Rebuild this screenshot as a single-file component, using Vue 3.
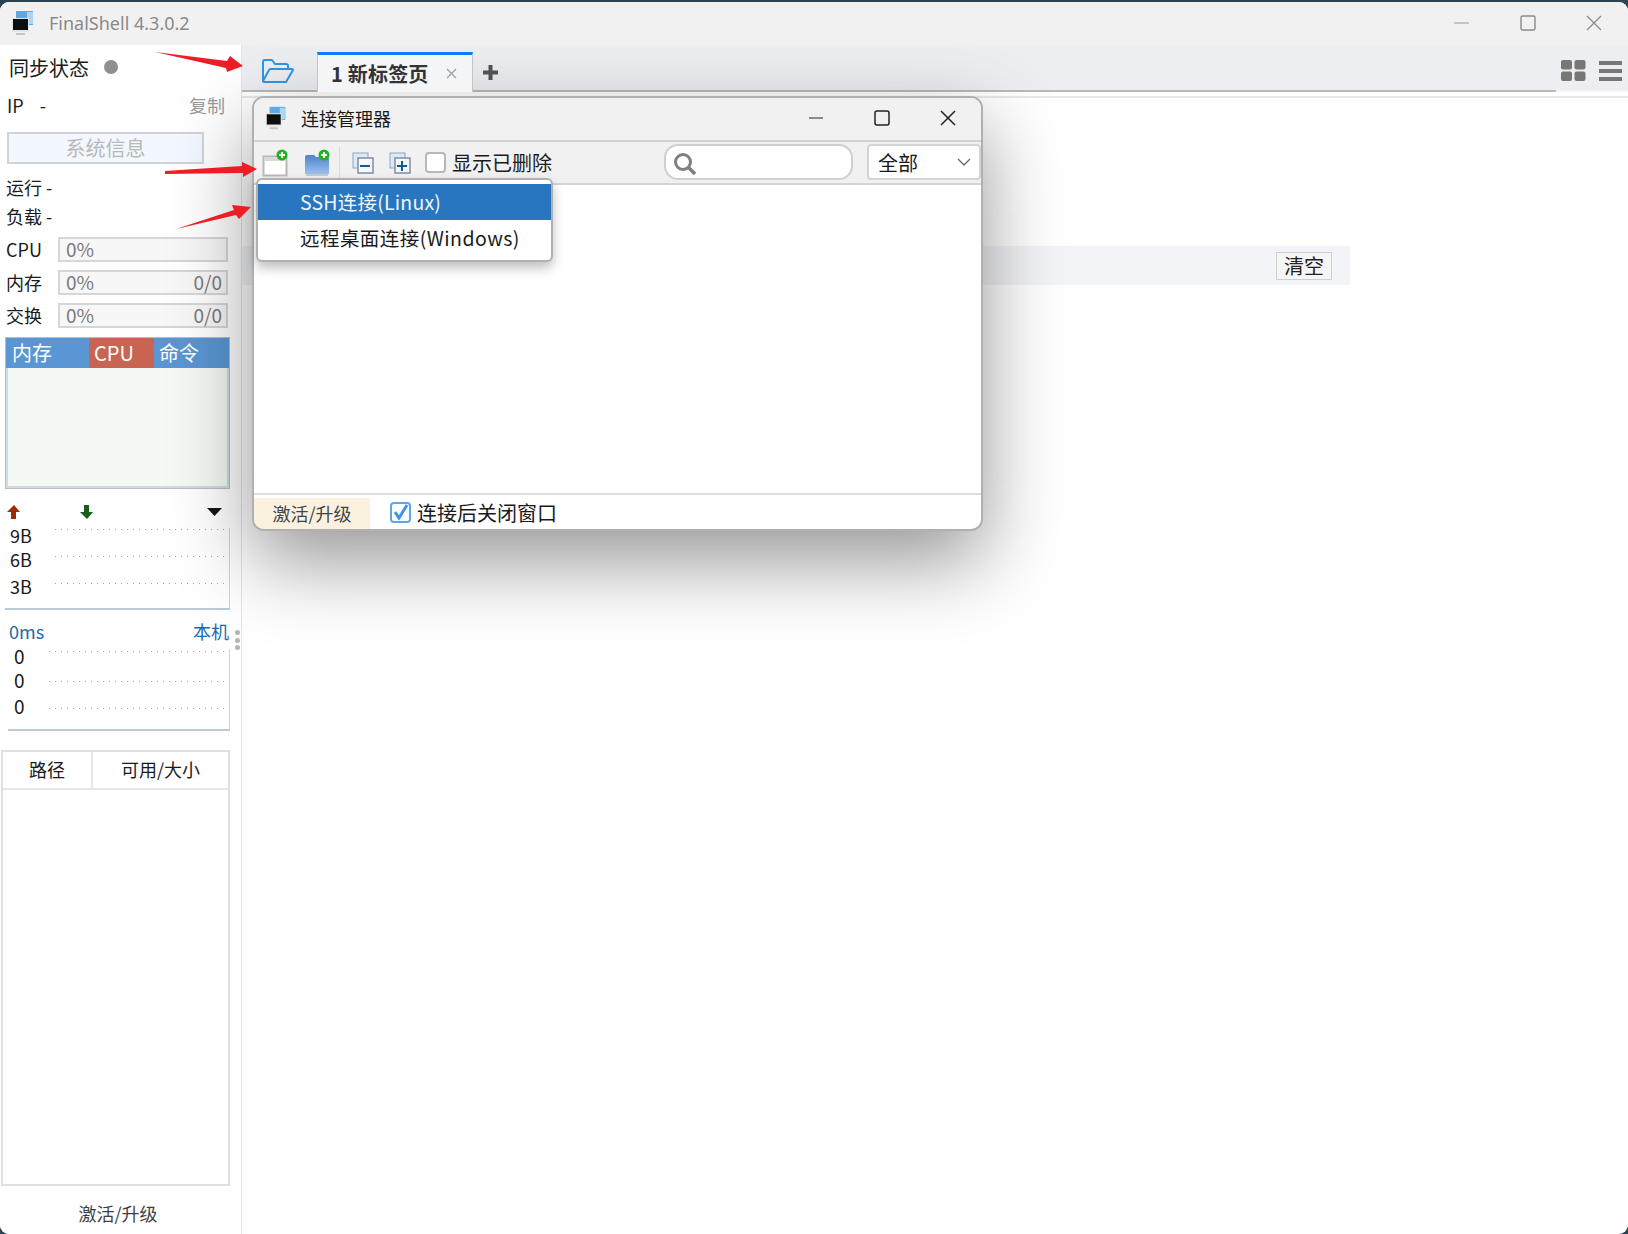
<template>
  <div class="window">
    <header class="titlebar">
      <svg class="logo" width="28" height="28" viewBox="0 0 28 28">
        <rect x="6" y="2" width="17" height="14" fill="#5aa9ea" />
        <rect x="17" y="3" width="6" height="12" fill="#a9d6f7" />
        <rect x="2" y="9" width="17" height="14" rx="1" fill="#e4e4e4" />
        <rect x="3" y="10" width="15" height="11" fill="#0d0d0d" />
        <rect x="6" y="24" width="9" height="2" fill="#c6c6c6" />
      </svg>
      <span class="app-name">FinalShell 4.3.0.2</span>
      <div class="win-btns">
        <svg width="16" height="16" viewBox="0 0 16 16"><path d="M0 8h15" stroke="#9a9a9a" fill="none" /></svg>
        <svg width="16" height="16" viewBox="0 0 16 16"><rect x="1" y="1" width="14" height="14" rx="1.500" stroke="#8a8a8a" stroke-width="1.400" fill="none" /></svg>
        <svg width="16" height="16" viewBox="0 0 16 16"><path d="M1 1l14 14M15 1L1 15" stroke="#8a8a8a" stroke-width="1.300" fill="none" /></svg>
      </div>
    </header>

    <div class="body">
      <aside class="sidebar">
        <div class="sync">同步状态<i class="dot"></i></div>
        <div class="ip-row"><span>IP&nbsp;&nbsp;&nbsp; -</span><span class="copy">复制</span></div>
        <div class="sysinfo">系统信息</div>
        <div class="kv first">运行 -</div>
        <div class="kv">负载 -</div>
        <div class="meters">
          <div v-for="m in meters" :key="m.name" class="meter">
            <span class="meter-name">{{ m.name }}</span>
            <div class="meter-box"><span>0%</span><span>{{ m.extra }}</span></div>
          </div>
        </div>
        <div class="proc">
          <div class="proc-head">
            <span class="ph-mem">内存</span><span class="ph-cpu">CPU</span><span class="ph-cmd">命令</span>
          </div>
          <div class="proc-body"></div>
        </div>
        <div class="net-arrows">
          <svg width="16" height="16" viewBox="0 0 16 16"><path d="M8 1L1 8h4v7h5V8h4z" fill="#9c2c05" /></svg>
          <svg class="down" width="16" height="16" viewBox="0 0 16 16"><path d="M8 15L1 8h4V1h5v7h4z" fill="#15601a" /></svg>
          <svg class="drop" width="16" height="10" viewBox="0 0 16 10"><path d="M0 1h15L7.500 9z" fill="#151515" /></svg>
        </div>
        <div class="chart net">
          <div class="labels">
            <span v-for="l in netLabels" :key="l">{{ l }}</span>
          </div>
          <div class="dots"><i></i><i></i><i></i></div>
        </div>
        <div class="ping-head"><span>0ms</span><span>本机</span></div>
        <div class="chart ping">
          <div class="labels">
            <span v-for="(l, i) in pingLabels" :key="i">{{ l }}</span>
          </div>
          <div class="dots"><i></i><i></i><i></i></div>
        </div>
        <div class="disk">
          <div class="disk-head"><span class="d-path">路径</span><span class="d-size">可用/大小</span></div>
        </div>
        <div class="activate">激活/升级</div>
        <div class="grip"><i></i><i></i><i></i></div>
      </aside>

      <main class="main">
        <div class="tabs">
          <svg class="folder" width="34" height="26" viewBox="0 0 34 26">
            <path d="M2 23V4a2 2 0 0 1 2-2h7l3 4h11a2 2 0 0 1 2 2v3M2 23c0 1 1 1 2 1h21l7-12a1 1 0 0 0-1-1H10a2 2 0 0 0-2 1z" fill="none" stroke="#2f95e8" stroke-width="2" stroke-linejoin="round" />
          </svg>
          <div class="tab">
            <span>1 新标签页</span>
            <svg class="tab-x" width="11" height="11" viewBox="0 0 11 11"><path d="M1 1l9 9M10 1l-9 9" stroke="#a0a0a0" stroke-width="1.400" /></svg>
          </div>
          <svg class="plus" width="15" height="15" viewBox="0 0 15 15"><path d="M7.500 0v15M0 7.500h15" stroke="#555" stroke-width="4" /></svg>
          <div class="view-btns">
            <svg width="25" height="21" viewBox="0 0 25 21">
              <rect x="0" y="0" width="11" height="9.500" rx="2" fill="#777" />
              <rect x="13.500" y="0" width="11" height="9.500" rx="2" fill="#777" />
              <rect x="0" y="11.500" width="11" height="9.500" rx="2" fill="#777" />
              <rect x="13.500" y="11.500" width="11" height="9.500" rx="2" fill="#777" />
            </svg>
            <svg width="24" height="20" viewBox="0 0 24 20">
              <path d="M0 2h23M0 10h23M0 18h23" stroke="#777" stroke-width="4" />
            </svg>
          </div>
        </div>
        <div class="content">
          <div class="clear-bar"><button class="clear-btn">清空</button></div>
        </div>
      </main>
    </div>

    <section class="dialog">
      <div class="dlg-title">
        <svg class="logo" width="26" height="26" viewBox="0 0 28 28">
          <rect x="6" y="2" width="17" height="14" fill="#5aa9ea" />
          <rect x="17" y="3" width="6" height="12" fill="#a9d6f7" />
          <rect x="2" y="9" width="17" height="14" rx="1" fill="#e4e4e4" />
          <rect x="3" y="10" width="15" height="11" fill="#0d0d0d" />
          <rect x="6" y="24" width="9" height="2" fill="#c6c6c6" />
        </svg>
        <span class="dlg-name">连接管理器</span>
        <div class="dlg-btns">
          <svg width="16" height="16" viewBox="0 0 16 16"><path d="M1 8h14" stroke="#222" fill="none" /></svg>
          <svg width="16" height="16" viewBox="0 0 16 16"><rect x="1" y="1" width="14" height="14" rx="2" stroke="#222" stroke-width="1.500" fill="none" /></svg>
          <svg width="16" height="16" viewBox="0 0 16 16"><path d="M1 1l14 14M15 1L1 15" stroke="#222" stroke-width="1.500" fill="none" /></svg>
        </div>
      </div>
      <div class="dlg-tools">
        <svg width="28" height="28" viewBox="0 0 28 28">
          <rect x="2.500" y="7.500" width="23" height="19" fill="#fff" stroke="#b9b9b9" stroke-width="2" />
          <rect x="3" y="8" width="22" height="4" fill="#d8d8d8" />
          <circle cx="21" cy="6" r="5.500" fill="#1fb51f" />
          <path d="M21 3v6M18 6h6" stroke="#fff" stroke-width="2" />
        </svg>
        <svg class="new-folder" width="28" height="28" viewBox="0 0 28 28">
          <defs>
            <linearGradient id="folderFill" x1="0" y1="0" x2="0" y2="1">
              <stop offset="0" stop-color="#4f82c9" />
              <stop offset="1" stop-color="#9cc0f0" />
            </linearGradient>
          </defs>
          <path d="M2 8a2 2 0 0 1 2-2h7l2 2h11a2 2 0 0 1 2 2v15H2z" fill="url(#folderFill)" />
          <rect x="3" y="25" width="22" height="2" fill="#c9c9c9" />
          <circle cx="21" cy="6" r="5.500" fill="#1fb51f" />
          <path d="M21 3v6M18 6h6" stroke="#fff" stroke-width="2" />
        </svg>
        <i class="sep"></i>
        <svg width="22" height="22" viewBox="0 0 22 22">
          <rect x="1" y="1" width="15" height="15" fill="#dbe8f7" stroke="#8fa5bd" />
          <rect x="6" y="6" width="15" height="15" fill="#f4f7fb" stroke="#7c8ea3" stroke-width="1.500" />
          <path d="M8 14h10" stroke="#0e5a96" stroke-width="2" />
        </svg>
        <svg class="cp2" width="22" height="22" viewBox="0 0 22 22">
          <rect x="1" y="1" width="15" height="15" fill="#dbe8f7" stroke="#8fa5bd" />
          <rect x="6" y="6" width="15" height="15" fill="#f4f7fb" stroke="#7c8ea3" stroke-width="1.500" />
          <path d="M8 14h10M13 9v10" stroke="#0e5a96" stroke-width="2" />
        </svg>
        <span class="check"></span>
        <span class="show-del">显示已删除</span>
        <div class="search">
          <svg width="26" height="26" viewBox="0 0 26 26">
            <circle cx="11" cy="11" r="7.500" fill="none" stroke="#7f7f7f" stroke-width="3" />
            <path d="M16 16l7 7" stroke="#7f7f7f" stroke-width="3.500" />
          </svg>
        </div>
        <div class="select">
          <span>全部</span>
          <svg width="14" height="9" viewBox="0 0 14 9"><path d="M1 1l6 6 6-6" fill="none" stroke="#666" stroke-width="1.300" /></svg>
        </div>
      </div>
      <div class="dlg-list"></div>
      <div class="dlg-foot">
        <span class="upgrade">激活/升级</span>
        <span class="check on">
          <svg width="16" height="18" viewBox="0 0 16 18"><path d="M2 9l4 6 8-13" fill="none" stroke="#3d96ee" stroke-width="3" /></svg>
        </span>
        <span class="after">连接后关闭窗口</span>
      </div>

      <div class="menu">
        <div class="menu-item active">SSH连接(Linux)</div>
        <div class="menu-item">远程桌面连接(Windows)</div>
      </div>
    </section>

    <svg class="arrow a1" width="90" height="26" viewBox="0 0 90 26"><path d="M0 2L72 11 75 6 88 16 72 22 71 18z" fill="#ee1c25" /></svg>
    <svg class="arrow a2" width="92" height="20" viewBox="0 0 92 20"><path d="M0 11L77 6 77 2 92 9 78 17 78 13 0 14z" fill="#ee1c25" /></svg>
    <svg class="arrow a3" width="76" height="28" viewBox="0 0 76 28"><path d="M0 26L58 7 56 2 75 4 63 16 60 12z" fill="#ee1c25" /></svg>
  </div>
</template>

<script setup>
const meters = [
  { name: 'CPU', extra: '' },
  { name: '内存', extra: '0/0' },
  { name: '交换', extra: '0/0' }
]
const netLabels = ['9B', '6B', '3B']
const pingLabels = ['0', '0', '0']
</script>

<style>
html,
body {
  margin: 0;
  background: #2c4350;
}
</style>

<style scoped>
.window {
  position: relative;
  width: 1628px;
  height: 1232px;
  margin-top: 2px;
  border-radius: 9px;
  overflow: hidden;
  background: #fff;
  display: flex;
  flex-direction: column;
  font-family: "Noto Sans CJK SC", "Noto Sans", sans-serif;
  font-size: 18px;
  color: #1a1a1a;
}

.titlebar {
  height: 43px;
  flex: none;
  box-sizing: border-box;
  padding: 0 26px 2px 10px;
  background: #f1f1f1;
  display: flex;
  align-items: center;
}
.app-name {
  margin-left: 11px;
  font-family: "Noto Sans", sans-serif;
  font-size: 18px;
  color: #8a8a8a;
}
.win-btns {
  margin-left: auto;
  display: flex;
  gap: 50px;
}

.body {
  flex: 1;
  display: flex;
  min-height: 0;
}

.sidebar {
  position: relative;
  width: 242px;
  flex: none;
  box-sizing: border-box;
  border-right: 1px solid #e4e4e4;
  background: #fff;
  display: flex;
  flex-direction: column;
}
.sync {
  height: 45px;
  padding: 0 0 1px 9px;
  box-sizing: border-box;
  display: flex;
  align-items: center;
  font-size: 20px;
}
.dot {
  width: 14px;
  height: 14px;
  border-radius: 50%;
  background: #8f8f8f;
  margin-left: 15px;
}
.ip-row {
  height: 34px;
  box-sizing: border-box;
  padding: 0 16px 4px 7px;
  display: flex;
  justify-content: space-between;
  align-items: center;
  font-size: 18px;
}
.copy {
  color: #9b9b9b;
}
.sysinfo {
  width: 197px;
  height: 32px;
  margin: 8px 0 0 7px;
  box-sizing: border-box;
  border: 2px solid #d0d4d8;
  background: #f2f8fd;
  color: #b9b9b9;
  text-align: center;
  font-size: 20px;
  line-height: 27px;
}
.kv {
  height: 29px;
  line-height: 25px;
  padding-left: 6px;
}
.kv.first {
  margin-top: 11px;
}
.meters {
  margin-top: 4px;
  display: flex;
  flex-direction: column;
  gap: 8px;
}
.meter {
  display: flex;
  align-items: center;
  height: 25px;
  padding-left: 6px;
}
.meter-name {
  width: 52px;
  line-height: 23px;
  margin-top: -1px;
}
.meter-box {
  width: 170px;
  height: 25px;
  box-sizing: border-box;
  border: 2px solid #d6d6d6;
  background: #f7f7f7;
  padding: 0 4px 2px 6px;
  display: flex;
  justify-content: space-between;
  align-items: center;
  font-size: 19px;
  color: #7a7a7a;
}
.proc {
  width: 225px;
  height: 152px;
  margin: 9px 0 0 5px;
  box-sizing: border-box;
  border: 1px solid #bdbdbd;
  display: flex;
  flex-direction: column;
}
.proc-head {
  height: 30px;
  flex: none;
  display: flex;
  color: #fff;
  font-size: 20px;
  line-height: 30px;
}
.proc-head span {
  padding-left: 6px;
  box-sizing: border-box;
}
.proc-head .ph-mem {
  width: 83px;
  padding-left: 6px;
  background: #5a96d3;
}
.ph-cpu {
  width: 65px;
  background: #c86452;
  text-indent: -1px;
}
.ph-cmd {
  flex: 1;
  background: #5a96d3;
  text-indent: -1px;
}
.proc-body {
  flex: 1;
  background: #f4f9f3;
  border: 2px solid #cddbe6;
  border-top: 0;
}
.net-arrows {
  height: 24px;
  margin-top: 11px;
  padding-left: 6px;
  display: flex;
  align-items: center;
}
.down {
  margin-left: 57px;
}
.drop {
  margin-left: 112px;
}

.chart {
  height: 86px;
  flex: none;
  margin-right: 11px;
  box-sizing: border-box;
  border-bottom: 2px solid #b8ccd8;
  display: flex;
}
.labels {
  flex: none;
  display: flex;
  flex-direction: column;
  box-sizing: border-box;
  margin-top: -1px;
}
.labels span {
  height: 24px;
  line-height: 24px;
}
.labels span:last-child {
  margin-top: 3px;
}
.dots {
  flex: 1;
  margin-top: 4px;
  padding: 1px 5px 0 0;
  border-right: 1px solid #c9d6e0;
}
.dots i {
  display: block;
  height: 1px;
  margin-bottom: 26px;
  background: linear-gradient(to right, #a6a6a6 1px, transparent 1px) 0 0 / 6px 1px repeat-x;
}
.net {
  margin-left: 5px;
}
.net .labels {
  width: 50px;
  padding-left: 5px;
}
.ping-head {
  height: 24px;
  margin: 9px 12px 2px 9px;
  display: flex;
  justify-content: space-between;
  align-items: center;
  color: #1e6aa8;
}
.ping {
  margin-left: 8px;
}
.ping .labels {
  width: 41px;
  padding-left: 6px;
  font-size: 19px;
}
.ping .labels span:last-child {
  margin-top: 2px;
}
.ping .dots {
  padding-top: 2px;
}
.ping .dots i:first-child {
  margin-bottom: 29px;
}

.disk {
  margin: 19px 0 0 1px;
  width: 229px;
  height: 436px;
  box-sizing: border-box;
  border: 2px solid #e0e0e0;
  flex: none;
}
.disk-head {
  height: 36px;
  display: flex;
  border-bottom: 2px solid #e6e6e6;
  line-height: 34px;
  text-align: center;
}
.d-path {
  width: 88px;
  border-right: 2px solid #e8e8e8;
}
.d-size {
  flex: 1;
}
.activate {
  margin-top: 14px;
  line-height: 26px;
  text-align: center;
  color: #3f3f3f;
  padding-right: 5px;
}
.grip {
  position: absolute;
  left: 235px;
  top: 585px;
  display: flex;
  flex-direction: column;
  gap: 2.500px;
}
.grip i {
  width: 5px;
  height: 5px;
  border-radius: 50%;
  background: #b4b4b4;
}

.main {
  flex: 1;
  min-width: 0;
  display: flex;
  flex-direction: column;
}
.tabs {
  height: 47px;
  flex: none;
  box-sizing: border-box;
  background: #eceef2;
  border-bottom: 2px solid #b9b9b9;
  display: flex;
  align-items: flex-end;
  position: relative;
}
.tabs::after {
  content: '';
  position: absolute;
  right: 0;
  bottom: -2px;
  width: 72px;
  height: 2px;
  background: #f3f4f6;
}
.folder {
  margin: 0 0 6px 19px;
}
.tab {
  margin-left: 22px;
  margin-bottom: -2px;
  width: 156px;
  height: 40px;
  box-sizing: border-box;
  background: #f4f5f7;
  border-top: 3px solid #0e7cf0;
  border-left: 1px solid #c4c4c4;
  border-right: 1px solid #c4c4c4;
  padding-left: 13px;
  display: flex;
  align-items: center;
  font-weight: 700;
  font-size: 20px;
  letter-spacing: 0.2px;
  color: #333;
  position: relative;
  z-index: 1;
}
.tab-x {
  margin-left: 17px;
}
.plus {
  margin: 0 0 10px 10px;
}
.view-btns {
  margin: 0 5px 9px auto;
  display: flex;
  gap: 13px;
  align-items: center;
}
.content {
  flex: 1;
  border-top: 2px solid #e8e8e8;
  margin-top: 4px;
}
.clear-bar {
  width: 1108px;
  height: 39px;
  margin-top: 148px;
  background: #f3f4f7;
  display: flex;
  justify-content: flex-end;
  align-items: center;
  padding-right: 18px;
  box-sizing: border-box;
}
.clear-btn {
  width: 56px;
  height: 28px;
  border: 1px solid #cfcfcf;
  background: #f6f6f6;
  font: inherit;
  font-size: 20px;
  line-height: 26px;
  padding: 0;
  color: #222;
}

.dialog {
  position: absolute;
  left: 252px;
  top: 94px;
  width: 731px;
  height: 435px;
  box-sizing: border-box;
  border: 2px solid #b0b0b0;
  border-radius: 12px;
  background: #fff;
  box-shadow: 0 30px 80px rgba(0, 0, 0, 0.42);
  display: flex;
  flex-direction: column;
}
.dlg-title {
  height: 40px;
  padding: 0 0 2px 10px;
  flex: none;
  background: #f1f1f1;
  border-radius: 10px 10px 0 0;
  border-bottom: 2px solid #d2d2d2;
  display: flex;
  align-items: center;
}
.dlg-name {
  margin-left: 11px;
}
.dlg-btns {
  margin-left: auto;
  margin-right: 25px;
  display: flex;
  gap: 50px;
}
.dlg-tools {
  height: 41px;
  flex: none;
  background: #f1f1f1;
  border-bottom: 2px solid #d4d4d4;
  display: flex;
  align-items: center;
  padding-left: 7px;
  position: relative;
}
.new-folder {
  margin-left: 14px;
}
.sep {
  width: 1px;
  height: 32px;
  background: #dadada;
  margin: 0 12px 0 8px;
}
.cp2 {
  margin-left: 15px;
}
.check {
  width: 21px;
  height: 21px;
  box-sizing: border-box;
  border: 2px solid #b8b8b8;
  border-radius: 4px;
  background: #fff;
  margin-left: 14px;
  flex: none;
}
.show-del {
  margin-left: 6px;
  font-size: 20px;
}
.search {
  position: absolute;
  left: 410px;
  top: 2px;
  width: 189px;
  height: 36px;
  box-sizing: border-box;
  border: 2px solid #cfcfcf;
  border-radius: 14px;
  background: #fff;
  padding: 5px 0 0 6px;
}
.select {
  position: absolute;
  left: 613px;
  top: 2px;
  width: 114px;
  height: 36px;
  box-sizing: border-box;
  border: 2px solid #d4d4d4;
  border-radius: 4px;
  background: #fff;
  padding: 0 8px 0 9px;
  display: flex;
  align-items: center;
  justify-content: space-between;
  font-size: 20px;
}
.dlg-list {
  flex: 1;
  background: #fff;
}
.dlg-foot {
  height: 34px;
  flex: none;
  border-top: 2px solid #dedede;
  display: flex;
  align-items: center;
  border-radius: 0 0 10px 10px;
  overflow: hidden;
}
.upgrade {
  width: 116px;
  height: 31px;
  align-self: flex-end;
  background: #fbf1df;
  text-align: center;
  line-height: 31px;
  color: #444;
}
.check.on {
  border-color: #5aa7ee;
  margin-left: 20px;
  display: flex;
  align-items: center;
  justify-content: center;
}
.check.on svg {
  flex: none;
}
.after {
  margin-left: 6px;
  font-size: 20px;
}
.menu {
  position: absolute;
  left: 2px;
  top: 80px;
  width: 297px;
  height: 84px;
  box-sizing: border-box;
  border: 2px solid #b0b0b0;
  border-radius: 6px;
  background: #fff;
  padding-top: 4px;
  box-shadow: 0 6px 12px rgba(0, 0, 0, 0.25);
}
.menu-item {
  height: 36px;
  line-height: 36px;
  padding-left: 42px;
  font-size: 19.500px;
  letter-spacing: 0.45px;
}
.menu-item.active {
  background: #2876bf;
  color: #f1f6fb;
  letter-spacing: 0.2px;
}

.arrow {
  position: absolute;
}
.a1 {
  left: 155px;
  top: 48px;
}
.a2 {
  left: 165px;
  top: 158px;
}
.a3 {
  left: 176px;
  top: 201px;
}
</style>
